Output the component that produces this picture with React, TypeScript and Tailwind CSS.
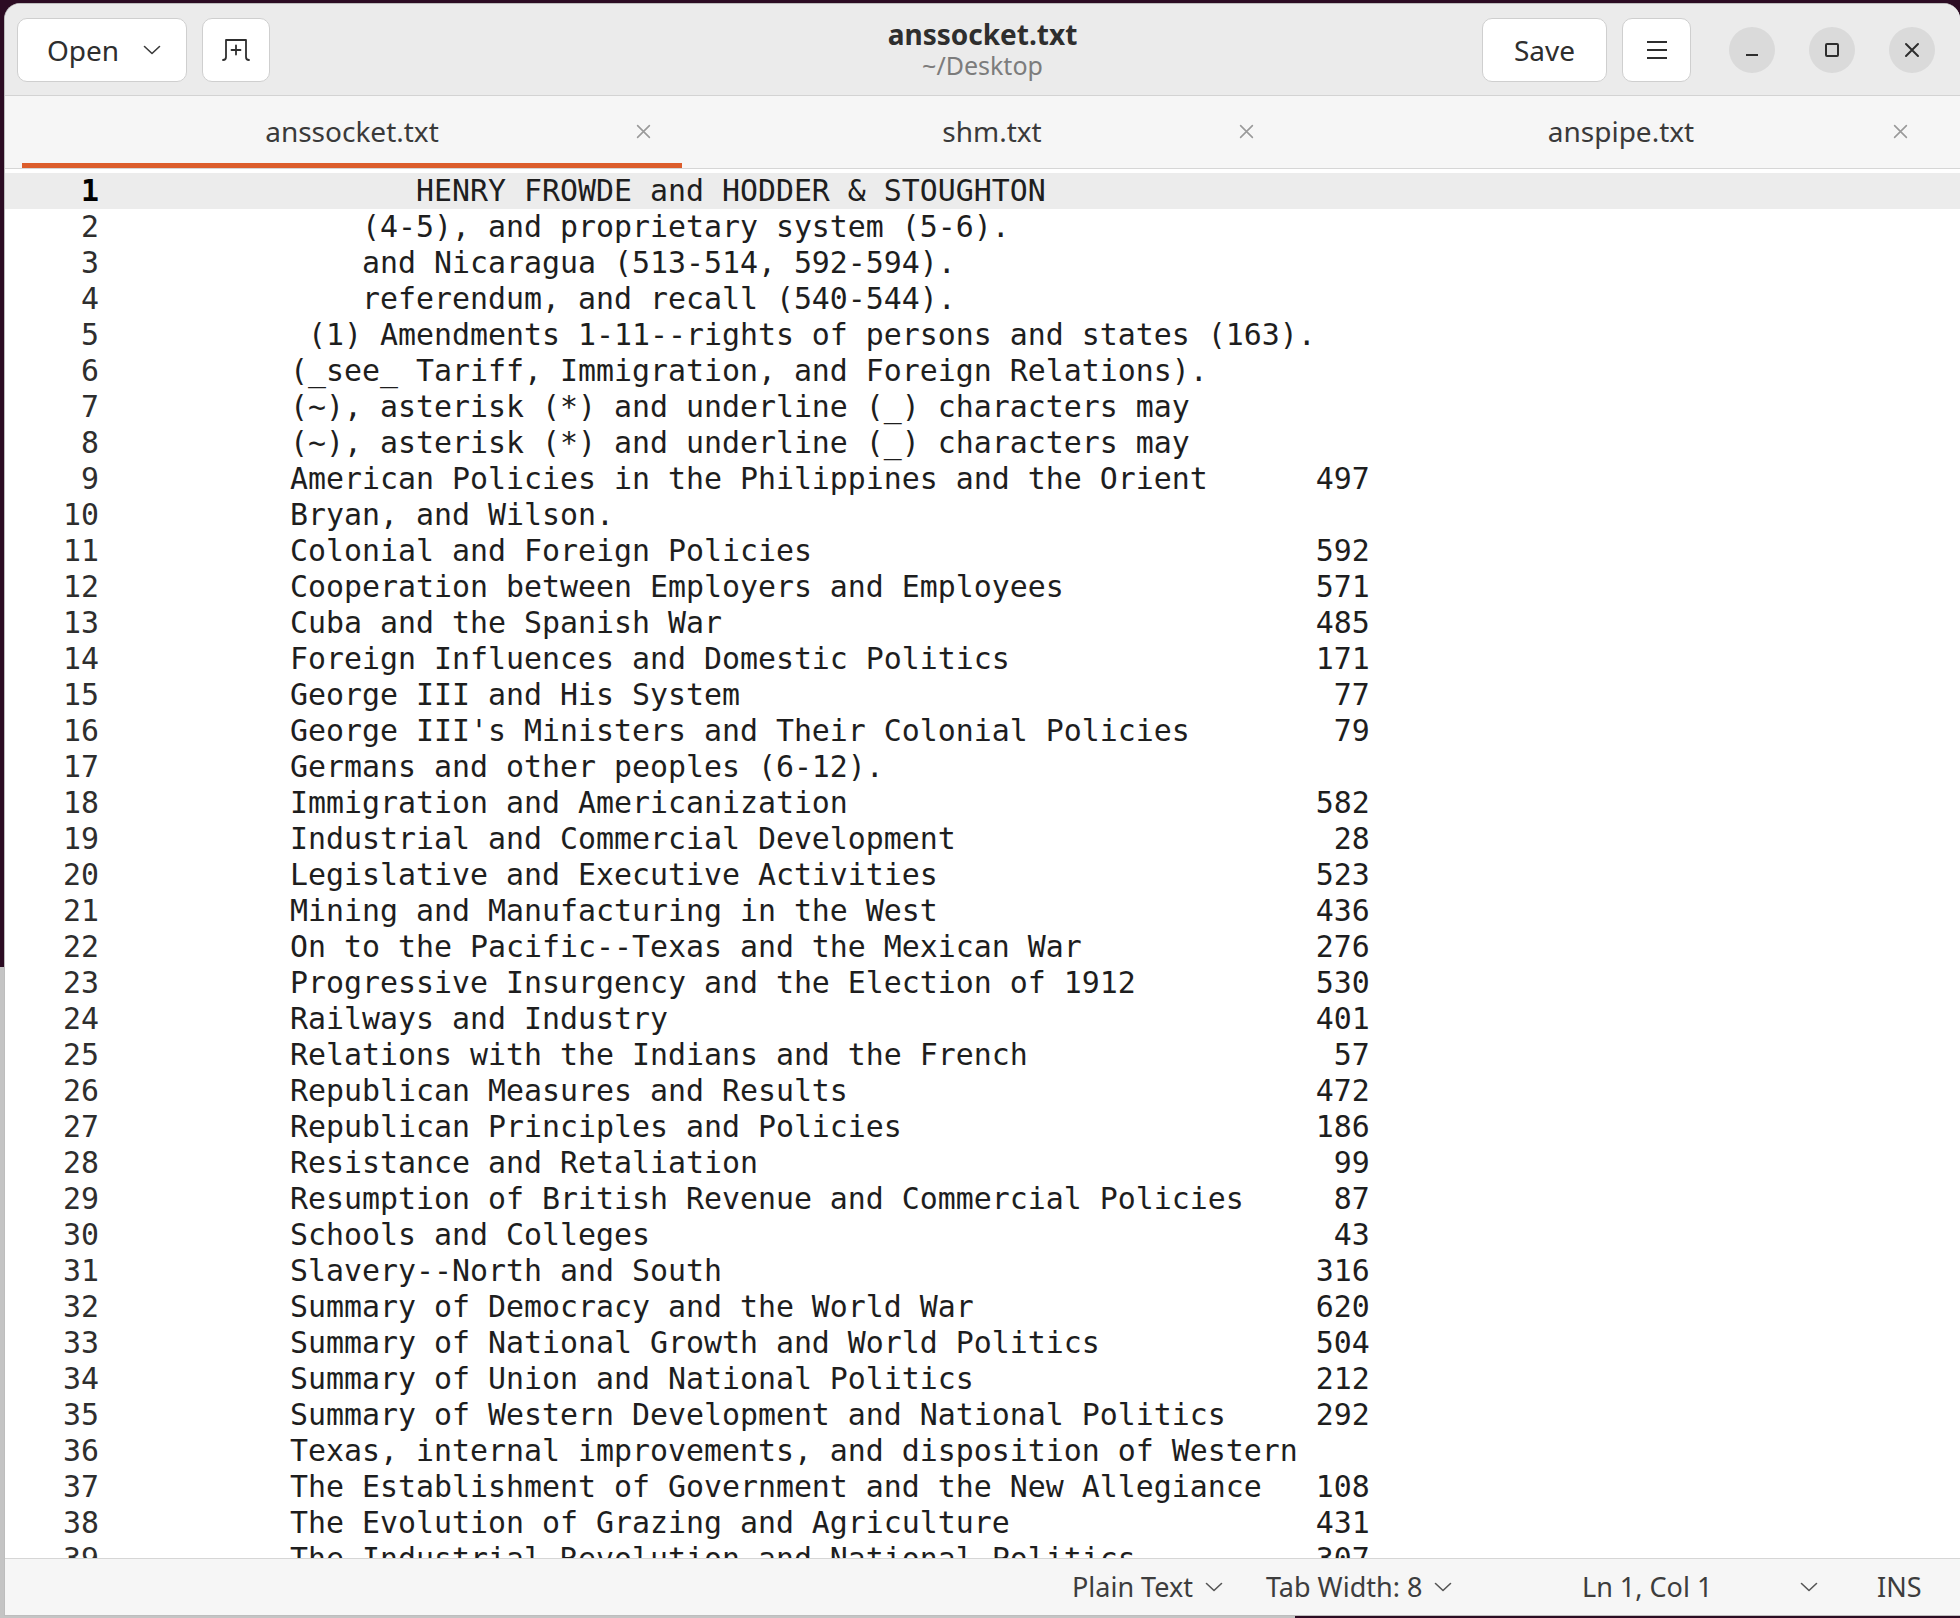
import React from 'react';

const lines: [string, string?][] = [
  ['       HENRY FROWDE and HODDER & STOUGHTON'],
  ['    (4-5), and proprietary system (5-6).'],
  ['    and Nicaragua (513-514, 592-594).'],
  ['    referendum, and recall (540-544).'],
  [' (1) Amendments 1-11--rights of persons and states (163).'],
  ['(_see_ Tariff, Immigration, and Foreign Relations).'],
  ['(~), asterisk (*) and underline (_) characters may'],
  ['(~), asterisk (*) and underline (_) characters may'],
  ['American Policies in the Philippines and the Orient', '497'],
  ['Bryan, and Wilson.'],
  ['Colonial and Foreign Policies', '592'],
  ['Cooperation between Employers and Employees', '571'],
  ['Cuba and the Spanish War', '485'],
  ['Foreign Influences and Domestic Politics', '171'],
  ['George III and His System', '77'],
  ["George III's Ministers and Their Colonial Policies", '79'],
  ['Germans and other peoples (6-12).'],
  ['Immigration and Americanization', '582'],
  ['Industrial and Commercial Development', '28'],
  ['Legislative and Executive Activities', '523'],
  ['Mining and Manufacturing in the West', '436'],
  ['On to the Pacific--Texas and the Mexican War', '276'],
  ['Progressive Insurgency and the Election of 1912', '530'],
  ['Railways and Industry', '401'],
  ['Relations with the Indians and the French', '57'],
  ['Republican Measures and Results', '472'],
  ['Republican Principles and Policies', '186'],
  ['Resistance and Retaliation', '99'],
  ['Resumption of British Revenue and Commercial Policies', '87'],
  ['Schools and Colleges', '43'],
  ['Slavery--North and South', '316'],
  ['Summary of Democracy and the World War', '620'],
  ['Summary of National Growth and World Politics', '504'],
  ['Summary of Union and National Politics', '212'],
  ['Summary of Western Development and National Politics', '292'],
  ['Texas, internal improvements, and disposition of Western'],
  ['The Establishment of Government and the New Allegiance', '108'],
  ['The Evolution of Grazing and Agriculture', '431'],
  ['The Industrial Revolution and National Politics', '307'],
];

function Chevron({ className = '' }: { className?: string }) {
  return (
    <svg className={className} width="18" height="10" viewBox="0 0 18 10" fill="none" stroke="currentColor" strokeWidth={1.6} strokeLinecap="round" strokeLinejoin="round">
      <path d="M1.5 1.5L9 8.5L16.5 1.5" />
    </svg>
  );
}

function TabClose() {
  return (
    <svg width="15" height="15" viewBox="0 0 14 14" fill="none" stroke="#9a9a9a" strokeWidth={1.5} strokeLinecap="round">
      <path d="M1.5 1.5L12.5 12.5M12.5 1.5L1.5 12.5" />
    </svg>
  );
}

function Tab({ label, width, pr, active }: { label: string; width: string; pr: string; active?: boolean }) {
  return (
    <div className={`${width} h-full flex flex-col`}>
      <div className="flex-1 grid grid-cols-[1fr_auto_1fr] items-center pt-[3px]">
        <div />
        <span className="text-[#3a3a3a]">{label}</span>
        <div className={`flex justify-end ${pr}`}>
          <TabClose />
        </div>
      </div>
      <div className={active ? 'h-[5px] bg-[#dc5d2c]' : 'h-[5px]'} />
    </div>
  );
}

export default function App() {
  return (
    <div className="w-[1960px] h-[1618px] bg-[#2c0c23] flex flex-col overflow-hidden font-['Noto_Sans',sans-serif] text-[28px]">
      <div className="flex flex-1 min-h-0">
        <div className="w-[4px] flex flex-col">
          <div className="h-[967px] bg-[#2c0c23]" />
          <div className="flex-1 bg-[#c4c4c4]" />
        </div>

        <div className="flex-1 mt-[3px] flex flex-col bg-white rounded-t-[16px] overflow-hidden border-l border-t border-b border-[#bdbdbd]">
          {/* header bar */}
          <header className="h-[92px] shrink-0 bg-[#ebebeb] border-b border-[#d3d3d3] grid grid-cols-[1fr_auto_1fr] items-center px-[12px]">
            <div className="flex items-center gap-[15px]">
              <button className="w-[170px] h-[64px] bg-white border border-[#cfcfcf] rounded-[10px] flex items-center justify-center gap-[24px] pl-[4px] text-[#2e2e2e]">
                <span>Open</span>
                <Chevron className="text-[#3a3a3a]" />
              </button>
              <button className="w-[68px] h-[64px] bg-white border border-[#cfcfcf] rounded-[10px] flex items-center justify-center text-[#2e2e2e]">
                <svg width="30" height="26" viewBox="0 0 30 26" fill="none" stroke="currentColor" strokeWidth={1.8} strokeLinecap="round" strokeLinejoin="round">
                  <path d="M2 23C4 23 5 22 5 20V3H25V20C25 22 26 23 28 23" />
                  <path d="M15 8.5V17.5M10.5 13H19.5" />
                </svg>
              </button>
            </div>

            <div className="flex flex-col items-center">
              <span className="font-bold text-[#2e2e2e] text-[28px] leading-[31px]">anssocket.txt</span>
              <span className="text-[#7c7c7c] text-[25px] leading-[31px]">~/Desktop</span>
            </div>

            <div className="flex items-center justify-end">
              <button className="w-[125px] h-[64px] bg-white border border-[#cfcfcf] rounded-[10px] flex items-center justify-center text-[#2e2e2e]">
                Save
              </button>
              <button className="ml-[15px] w-[69px] h-[64px] bg-white border border-[#cfcfcf] rounded-[10px] flex items-center justify-center text-[#2e2e2e]">
                <svg width="22" height="20" viewBox="0 0 22 20" fill="none" stroke="currentColor" strokeWidth={2}>
                  <path d="M1 2H21M1 10H21M1 18H21" />
                </svg>
              </button>
              <div className="ml-[38px] flex items-center gap-[34px] mr-[13px]">
                <div className="w-[46px] h-[46px] rounded-full bg-[#dadada] flex items-center justify-center">
                  <svg width="16" height="16" viewBox="0 0 16 16" fill="none" stroke="#2e2e2e" strokeWidth={2}>
                    <path d="M2 13H14" />
                  </svg>
                </div>
                <div className="w-[46px] h-[46px] rounded-full bg-[#dadada] flex items-center justify-center">
                  <svg width="16" height="16" viewBox="0 0 16 16" fill="none" stroke="#2e2e2e" strokeWidth={2}>
                    <rect x="2" y="2" width="12" height="12" rx="1" />
                  </svg>
                </div>
                <div className="w-[46px] h-[46px] rounded-full bg-[#dadada] flex items-center justify-center">
                  <svg width="16" height="16" viewBox="0 0 16 16" fill="none" stroke="#2e2e2e" strokeWidth={2} strokeLinecap="round">
                    <path d="M2 2L14 14M14 2L2 14" />
                  </svg>
                </div>
              </div>
            </div>
          </header>

          {/* tabs */}
          <div className="h-[73px] shrink-0 bg-[#f6f6f6] border-b border-[#d6d6d6] flex pl-[17px]">
            <Tab label="anssocket.txt" width="w-[660px]" pr="pr-[31px]" active />
            <Tab label="shm.txt" width="w-[620px]" pr="pr-[48px]" />
            <Tab label="anspipe.txt" width="w-[638px]" pr="pr-[32px]" />
          </div>

          {/* editor */}
          <div className="flex-1 min-h-0 overflow-hidden bg-white pt-[4px] font-['DejaVu_Sans_Mono',monospace] text-[29.9px] text-[#1e1e1e]">
            {lines.map(([text, num], i) => {
              const current = i === 0;
              const content = num ? text.padEnd(57) + num.padStart(3) : text;
              return (
                <div key={i} className={`h-[36px] leading-[36px] flex ${current ? 'bg-[#ececec]' : ''}`}>
                  <div className={`w-[94px] shrink-0 text-right ${current ? 'font-bold text-black' : 'text-[#2e2e2e]'}`}>{i + 1}</div>
                  <div className="ml-[191px] whitespace-pre">{content}</div>
                </div>
              );
            })}
          </div>

          {/* status bar */}
          <div className="h-[57px] shrink-0 bg-[#f6f6f6] border-t border-[#d6d6d6] flex items-center text-[#3d3d3d] text-[27px]">
            <div className="w-[1067px] shrink-0" />
            <div className="w-[194px] shrink-0 flex items-center gap-[12px]">
              <span>Plain Text</span>
              <Chevron className="text-[#555]" />
            </div>
            <div className="w-[316px] shrink-0 flex items-center gap-[12px]">
              <span>Tab Width: 8</span>
              <Chevron className="text-[#555]" />
            </div>
            <div className="w-[218px] shrink-0">Ln 1, Col 1</div>
            <div className="w-[77px] shrink-0 flex items-center">
              <Chevron className="text-[#555]" />
            </div>
            <div>INS</div>
          </div>
        </div>
      </div>
      <div className="h-[2px] flex shrink-0">
        <div className="w-[1295px] bg-[#c4c4c4]" />
        <div className="flex-1 bg-[#2c0c23]" />
      </div>
    </div>
  );
}
